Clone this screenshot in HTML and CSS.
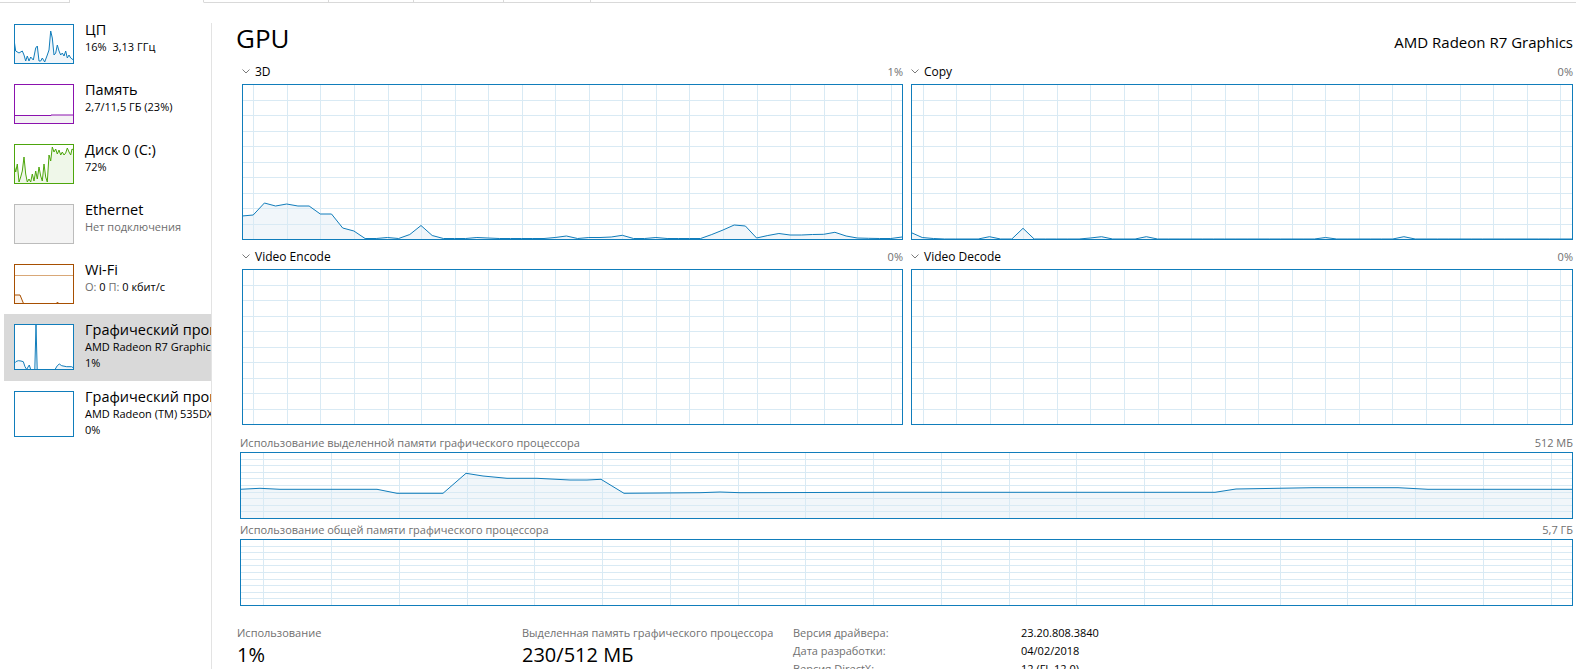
FILE: index.html
```html
<!DOCTYPE html>
<html lang="ru">

<head>
    <meta charset="UTF-8" />
    <title>Диспетчер задач - GPU</title>
    <link rel="stylesheet" href="styles.css">
</head>

<body>
    <div class="tabs">
        <div class="tab"></div>
        <div class="tab selected"></div>
        <div class="tab"></div>
        <div class="tab"></div>
        <div class="tab"></div>
        <div class="tab"></div>
        <div class="tab"></div>
    </div>

    <div class="window">
        <div class="sidebar">
            <div class="item">
                <svg class="thumb" viewBox="0 0 60 40">
                    <polygon class="cpu-fill" points="0.5,19 1.7,27 5,29 8.3,27 10,31 11.7,37 13.3,32 15,37 16.7,33 19.3,36 21.7,24 23.3,22 25,37 26.7,37 28.3,34 30.7,38 33.3,31 35,26 36.7,7 38.3,14 40,31 41.7,29 43.3,21 45,27 46.7,31 48.3,29 50,32 51.7,27 53.3,34 55,31 56.7,34 59.5,36 59.5,39.5 0.5,39.5" />
                    <polyline class="cpu-line" points="0.5,19 1.7,27 5,29 8.3,27 10,31 11.7,37 13.3,32 15,37 16.7,33 19.3,36 21.7,24 23.3,22 25,37 26.7,37 28.3,34 30.7,38 33.3,31 35,26 36.7,7 38.3,14 40,31 41.7,29 43.3,21 45,27 46.7,31 48.3,29 50,32 51.7,27 53.3,34 55,31 56.7,34 59.5,36" />
                    <rect class="cpu-frame" x="0.5" y="0.5" width="59" height="39" />
                </svg>
                <div class="info">
                    <div class="name">ЦП</div>
                    <div class="sub">16% &nbsp;3,13 ГГц</div>
                </div>
            </div>

            <div class="item">
                <svg class="thumb" viewBox="0 0 60 40">
                    <polygon class="mem-fill" points="0.5,31.5 37,31.5 37,31 59.5,31 59.5,39.5 0.5,39.5" />
                    <polyline class="mem-line" points="0.5,31.5 37,31.5 37,31 59.5,31" />
                    <rect class="mem-frame" x="0.5" y="0.5" width="59" height="39" />
                </svg>
                <div class="info">
                    <div class="name">Память</div>
                    <div class="sub">2,7/11,5 ГБ (23%)</div>
                </div>
            </div>

            <div class="item">
                <svg class="thumb" viewBox="0 0 60 40">
                    <polygon class="disk-fill" points="0.5,23 1.7,28 3.3,20 5,38 6.7,33 8.3,27 10,13 11.7,30 13.3,38 15,35 16.7,38 18.3,30 20,37 21.7,27 23.3,35 25,23 26.7,32 28.3,37 30,20 31.7,33 33.3,38 35,11 36.7,17 38.3,3 40,8 41.7,5 43.3,10 45,6 46.7,11 48.3,8 50,11 51.7,9 53.3,4 55,8 56.7,11 58,5 59.5,6 59.5,39.5 0.5,39.5" />
                    <polyline class="disk-line" points="0.5,23 1.7,28 3.3,20 5,38 6.7,33 8.3,27 10,13 11.7,30 13.3,38 15,35 16.7,38 18.3,30 20,37 21.7,27 23.3,35 25,23 26.7,32 28.3,37 30,20 31.7,33 33.3,38 35,11 36.7,17 38.3,3 40,8 41.7,5 43.3,10 45,6 46.7,11 48.3,8 50,11 51.7,9 53.3,4 55,8 56.7,11 58,5 59.5,6" />
                    <rect class="disk-frame" x="0.5" y="0.5" width="59" height="39" />
                </svg>
                <div class="info">
                    <div class="name">Диск 0 (C:)</div>
                    <div class="sub">72%</div>
                </div>
            </div>

            <div class="item">
                <svg class="thumb" viewBox="0 0 60 40">
                    <rect class="eth-frame" x="0.5" y="0.5" width="59" height="39" />
                </svg>
                <div class="info">
                    <div class="name">Ethernet</div>
                    <div class="sub dim">Нет подключения</div>
                </div>
            </div>

            <div class="item">
                <svg class="thumb" viewBox="0 0 60 40">
                    <line class="wifi-scale" x1="1" y1="11.5" x2="59" y2="11.5" />
                    <polygon class="wifi-fill" points="0.5,31 6,31 9.5,39.5 0.5,39.5" />
                    <polyline class="wifi-line" points="0.5,31 6,31 9.5,39.5" />
                    <polyline class="wifi-line" points="42.5,39.5 43.5,38 44.5,39.5" />
                    <rect class="wifi-frame" x="0.5" y="0.5" width="59" height="39" />
                </svg>
                <div class="info">
                    <div class="name">Wi-Fi</div>
                    <div class="sub"><span class="dim">О:</span> 0 <span class="dim">П:</span> 0 кбит/с</div>
                </div>
            </div>

            <div class="item tall active">
                <svg class="thumb" viewBox="0 0 60 46">
                    <rect x="0.5" y="0.5" width="59" height="45" fill="#fff" />
                    <polygon class="cpu-fill" points="0.5,39 2,37.5 4.3,36.7 7,37 9.3,37.7 11,42.7 12.7,45.5 14,43 15.3,41 16.7,45.5 20.8,45.5 22,1 23.2,45.5 41,45.5 43.3,41.7 45.3,40 47.7,41.7 52.7,42.7 57.7,42.7 59.5,44 59.5,45.5 0.5,45.5" />
                    <polyline class="cpu-line" points="0.5,39 2,37.5 4.3,36.7 7,37 9.3,37.7 11,42.7 12.7,45.5 14,43 15.3,41 16.7,45.5 20.8,45.5 22,1 23.2,45.5 41,45.5 43.3,41.7 45.3,40 47.7,41.7 52.7,42.7 57.7,42.7 59.5,44" />
                    <rect class="cpu-frame" x="0.5" y="0.5" width="59" height="45" />
                </svg>
                <div class="info">
                    <div class="name">Графический процессор 0</div>
                    <div class="sub">AMD Radeon R7 Graphics</div>
                    <div class="sub">1%</div>
                </div>
            </div>

            <div class="item tall">
                <svg class="thumb" viewBox="0 0 60 46">
                    <rect class="cpu-frame" x="0.5" y="0.5" width="59" height="45" />
                </svg>
                <div class="info">
                    <div class="name">Графический процессор 1</div>
                    <div class="sub">AMD Radeon (TM) 535DX</div>
                    <div class="sub">0%</div>
                </div>
            </div>
        </div>

        <div class="divider"></div>

        <div class="main">
            <div class="head">
                <h1>GPU</h1>
                <div class="model">AMD Radeon R7 Graphics</div>
            </div>

            <div class="engines">
                <div class="engine">
                    <div class="label-row">
                        <svg class="chev" viewBox="0 0 8 5"><polyline points="0.5,0.5 4,4 7.5,0.5" /></svg>
                        <span class="eng-name">3D</span>
                        <span class="pct">1%</span>
                    </div>
                    <svg class="graph" id="g3d"></svg>
                </div>
                <div class="engine">
                    <div class="label-row">
                        <svg class="chev" viewBox="0 0 8 5"><polyline points="0.5,0.5 4,4 7.5,0.5" /></svg>
                        <span class="eng-name">Copy</span>
                        <span class="pct">0%</span>
                    </div>
                    <svg class="graph" id="gcopy"></svg>
                </div>
                <div class="engine">
                    <div class="label-row">
                        <svg class="chev" viewBox="0 0 8 5"><polyline points="0.5,0.5 4,4 7.5,0.5" /></svg>
                        <span class="eng-name">Video Encode</span>
                        <span class="pct">0%</span>
                    </div>
                    <svg class="graph" id="genc"></svg>
                </div>
                <div class="engine">
                    <div class="label-row">
                        <svg class="chev" viewBox="0 0 8 5"><polyline points="0.5,0.5 4,4 7.5,0.5" /></svg>
                        <span class="eng-name">Video Decode</span>
                        <span class="pct">0%</span>
                    </div>
                    <svg class="graph" id="gdec"></svg>
                </div>
            </div>

            <div class="memory">
                <div class="mem-label">
                    <span>Использование выделенной памяти графического процессора</span>
                    <span>512 МБ</span>
                </div>
                <svg class="graph" id="gded"></svg>
                <div class="mem-label second">
                    <span>Использование общей памяти графического процессора</span>
                    <span>5,7 ГБ</span>
                </div>
                <svg class="graph" id="gshared"></svg>
            </div>

            <div class="stats">
                <div class="stat stat-use">
                    <div class="stat-label">Использование</div>
                    <div class="stat-value">1%</div>
                </div>
                <div class="stat stat-mem">
                    <div class="stat-label">Выделенная память графического процессора</div>
                    <div class="stat-value">230/512 МБ</div>
                </div>
                <div class="details">
                    <div class="key">Версия драйвера:</div>
                    <div>23.20.808.3840</div>
                    <div class="key">Дата разработки:</div>
                    <div>04/02/2018</div>
                    <div class="key">Версия DirectX:</div>
                    <div>12 (FL 12.0)</div>
                </div>
            </div>
        </div>
    </div>

    <script>
        const NS = "http://www.w3.org/2000/svg";

        function el(name, attrs) {
            const node = document.createElementNS(NS, name);
            for (const key in attrs) node.setAttribute(key, attrs[key]);
            return node;
        }

        // y values sampled evenly across the graph width
        function series(ys, width) {
            const step = (width - 1) / (ys.length - 1);
            return ys.map((y, i) => [+(i * step).toFixed(1), y]);
        }

        function drawGraph(id, cfg) {
            const svg = document.getElementById(id);
            const box = svg.getBoundingClientRect();
            const w = Math.round(box.width);
            const h = Math.round(box.height);
            const bottom = h - 1;

            let points = cfg.points;
            if (cfg.ys) points = series(cfg.ys, w);

            if (points) {
                const pts = points.map(p => p[0] + "," + p[1]).join(" ");
                const first = points[0];
                const last = points[points.length - 1];
                svg.appendChild(el("polygon", {
                    points: pts + " " + last[0] + "," + bottom + " " + first[0] + "," + bottom,
                    class: "area"
                }));
            }

            for (let i = 1; i < 10; i++) {
                const y = Math.round(i * bottom / 10) + 0.5;
                svg.appendChild(el("line", { x1: 0, x2: w, y1: y, y2: y, class: "grid" }));
            }
            for (let x = cfg.offset; x < w - 1; x += cfg.step) {
                const gx = Math.round(x) + 0.5;
                svg.appendChild(el("line", { x1: gx, x2: gx, y1: 0, y2: h, class: "grid" }));
            }

            if (points) {
                svg.appendChild(el("polyline", {
                    points: points.map(p => p[0] + "," + p[1]).join(" "),
                    class: "line"
                }));
            }

            svg.appendChild(el("rect", { x: 0.5, y: 0.5, width: w - 1, height: h - 1, class: "frame" }));
        }

        const flat = 155;
        const copy = new Array(60).fill(flat);
        copy[0] = 148.5; copy[1] = 153.5; copy[2] = 154.5; copy[7] = 152.7; copy[10] = 144.3;
        copy[16] = 154; copy[17] = 152.7; copy[21] = 152.7; copy[37] = 153.5; copy[44] = 152.7;

        drawGraph("g3d", {
            offset: 11.3, step: 33.55,
            ys: [132, 131, 119, 122, 120, 122, 122, 130, 130, 144, 147, 154.5, 154.5, 153.5, 154.5, 150.5, 141.5, 151.5, 154.5, 154.5,
                154.5, 153.5, 154, 154.5, 154.5, 154.5, 154.5, 154.5, 153.5, 152, 154.5, 153.5, 153.5, 153, 151.3, 154.5, 154.5, 153.5, 154.5, 154.5,
                154.5, 154.5, 150.5, 146, 141, 142, 154, 151.5, 149.5, 151, 151, 150.5, 150.3, 148.3, 152, 154, 154.3, 154.5, 154.5, 153]
        });
        drawGraph("gcopy", { offset: 11.7, step: 33.55, ys: copy });
        drawGraph("genc", { offset: 11.3, step: 33.55 });
        drawGraph("gdec", { offset: 11.7, step: 33.55 });

        drawGraph("gded", {
            offset: 23.3, step: 67.75,
            points: [[0, 37.3], [20, 36.3], [40, 37.3], [137, 37.3], [157, 41.3], [203, 41.3], [226, 21.3], [243, 24], [267, 26.3],
                [297, 26.3], [330, 28], [347, 28], [361, 27.3], [384, 41.3], [460, 40.7], [480, 40], [500, 40.7], [646, 40.3],
                [975, 40.3], [996, 37], [1073, 35.7], [1158, 35.7], [1188, 37.3], [1332, 37.3]]
        });
        drawGraph("gshared", { offset: 23.3, step: 67.75 });
    </script>
</body>

</html>
```

FILE: styles.css
```css
body {
    margin: 0;
    font-family: "Open Sans", "Noto Sans", sans-serif;
    background-color: #ffffff;
    color: #000000;
    overflow: hidden;
}

/* tab strip edge at the very top */
.tabs {
    display: flex;
    height: 3px;
}

.tab {
    box-sizing: border-box;
    height: 3px;
    border-right: 1px solid #d9d9d9;
    border-bottom: 1px solid #d9d9d9;
}

.tab:nth-child(1) { width: 70px; }
.tab:nth-child(2) { width: 134px; }
.tab:nth-child(3) { width: 125px; }
.tab:nth-child(4) { width: 85px; }
.tab:nth-child(5) { width: 90px; }
.tab:nth-child(6) { width: 87px; }

.tab:last-child {
    flex: 1;
    border-right: none;
}

.tab.selected {
    border-bottom-color: transparent;
}

.window {
    display: flex;
    height: 666px;
}

/* left list */
.sidebar {
    flex: none;
    width: 211px;
    box-sizing: border-box;
    padding: 11px 0 0 4px;
}

.divider {
    flex: none;
    width: 1px;
    margin-top: 20px;
    background-color: #e3e3e3;
}

.item {
    display: flex;
    gap: 11px;
    padding: 10px 0 10px 10px;
    overflow: hidden;
    white-space: nowrap;
}

.item.active {
    background-color: #d9d9d9;
}

.thumb {
    display: block;
    flex: none;
    width: 60px;
    height: 40px;
}

.item.tall .thumb {
    height: 46px;
}

.info {
    margin-top: -3px;
}

.name {
    font-size: 14.5px;
    line-height: 18px;
}

.sub {
    font-size: 11px;
    line-height: 16px;
}

.dim {
    color: #6d6d6d;
}

.cpu-frame { fill: none; stroke: #117dbb; }
.cpu-line { fill: none; stroke: #117dbb; }
.cpu-fill { fill: #f1f6fa; }

.mem-frame { fill: none; stroke: #8b12ae; }
.mem-line { fill: none; stroke: #8b12ae; }
.mem-fill { fill: #f4f2f4; }

.disk-frame { fill: none; stroke: #4da60c; }
.disk-line { fill: none; stroke: #4da60c; }
.disk-fill { fill: #eff7e9; }

.eth-frame { fill: #f4f4f4; stroke: #bcbcbc; }

.wifi-frame { fill: none; stroke: #a74f01; }
.wifi-line { fill: none; stroke: #a74f01; }
.wifi-fill { fill: #fcf3eb; }
.wifi-scale { stroke: #d9a878; }

/* right panel */
.main {
    flex: 1;
    min-width: 0;
    padding: 19px 3px 0 24px;
}

.head {
    display: flex;
    justify-content: space-between;
    align-items: baseline;
    height: 32px;
}

.head h1 {
    margin: 0;
    font-size: 26px;
    font-weight: 400;
    line-height: 32px;
}

.model {
    font-size: 15px;
}

.engines {
    display: grid;
    grid-template-columns: 661px 662px;
    column-gap: 8px;
    row-gap: 7px;
    margin: 8px 0 0 6px;
}

.label-row {
    display: flex;
    align-items: baseline;
    height: 22px;
    line-height: 20px;
}

.chev {
    align-self: flex-start;
    flex: none;
    width: 8px;
    height: 5px;
    margin: 7px 5px 0 0;
    fill: none;
    stroke: #7a7a7a;
}

.eng-name {
    font-size: 12px;
}

.pct {
    margin-left: auto;
    font-size: 11px;
    color: #707070;
}

.graph {
    display: block;
    width: 100%;
    height: 156px;
    background-color: #ffffff;
}

.graph .grid {
    stroke: #d9eaf4;
}

.graph .area {
    fill: #f1f6fa;
}

.graph .line {
    fill: none;
    stroke: #117dbb;
}

.graph .frame {
    fill: none;
    stroke: #117dbb;
}

.memory {
    margin-left: 4px;
}

.memory .graph {
    height: 67px;
}

.mem-label {
    display: flex;
    justify-content: space-between;
    margin-top: 9px;
    font-size: 11px;
    line-height: 18px;
    color: #707070;
}

.mem-label.second {
    margin-top: 2px;
}

/* numbers at the bottom */
.stats {
    display: flex;
    margin: 18px 0 0 1px;
}

.stat-use {
    width: 285px;
}

.stat-mem {
    width: 271px;
}

.stat-label {
    font-size: 11px;
    line-height: 18px;
    color: #707070;
}

.stat-value {
    font-size: 20px;
    line-height: 26px;
}

.details {
    display: grid;
    grid-template-columns: 228px auto;
    font-size: 11px;
    line-height: 18px;
}

.details .key {
    color: #707070;
}
```
